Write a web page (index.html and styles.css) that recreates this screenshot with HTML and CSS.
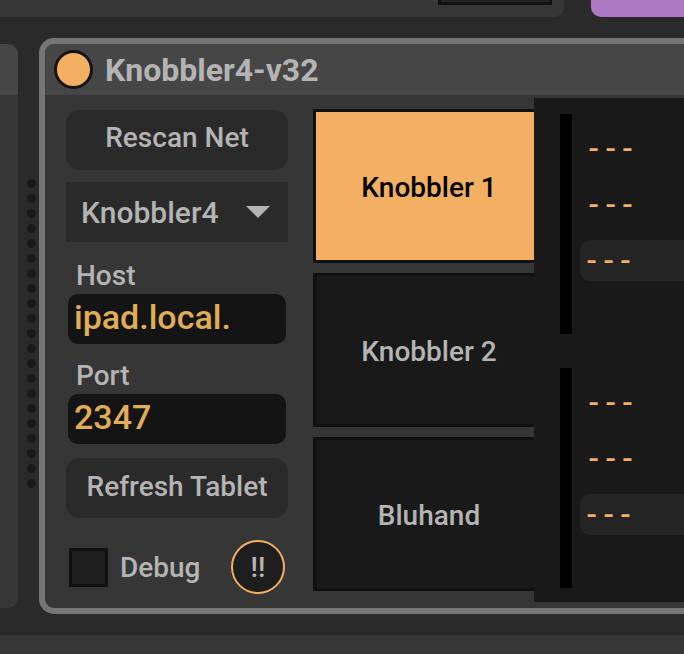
FILE: index.html
```html
<!DOCTYPE html>
<html lang="en">
<head>
<meta charset="utf-8">
<meta name="viewport" content="width=device-width, initial-scale=1">
<title>Knobbler4-v32</title>
<link rel="stylesheet" href="styles.css">
</head>
<body>
<div class="upper">
  <div class="upper-track"><div class="upper-slot"></div></div>
  <div class="upper-clip"></div>
</div>
<main class="rack">
  <div class="neighbor"><div class="neighbor-head"></div></div>
  <div class="meter">
    <svg width="9" height="310" viewBox="0 0 9 310" aria-hidden="true">
      <defs><pattern id="dots" width="9" height="15" patternUnits="userSpaceOnUse"><circle cx="4.5" cy="4.5" r="4.5" fill="#191919"/></pattern></defs>
      <rect width="9" height="310" fill="url(#dots)"/>
    </svg>
  </div>
  <section class="device">
    <header class="device-head">
      <button class="power" type="button" aria-label="Device on"></button>
      <h1 class="title">Knobbler4-v32</h1>
    </header>
    <div class="device-body">
      <form class="settings">
        <button class="pill" type="button">Rescan Net</button>
        <div class="chooser">
          <select class="select" aria-label="Target"><option>Knobbler4</option></select>
          <svg class="caret" width="24" height="12" viewBox="0 0 24 12" aria-hidden="true"><path d="M0 0h24L12 12z" fill="#b4b4b4"/></svg>
        </div>
        <div class="field">
          <label class="label" for="host">Host</label>
          <input class="input" id="host" type="text" value="ipad.local.">
        </div>
        <div class="field">
          <label class="label" for="port">Port</label>
          <input class="input" id="port" type="text" value="2347">
        </div>
        <button class="pill refresh" type="button">Refresh Tablet</button>
        <div class="debug">
          <input class="check" id="debug" type="checkbox">
          <label class="debug-label" for="debug">Debug</label>
          <button class="alert" type="button">!!</button>
        </div>
      </form>
      <nav class="tabs">
        <button class="tab tab-on" type="button">Knobbler 1</button>
        <button class="tab" type="button">Knobbler 2</button>
        <button class="tab" type="button">Bluhand</button>
      </nav>
      <div class="slots">
        <div class="slot">
          <div class="bar"></div>
          <div class="values">
            <div class="value">- - -</div>
            <div class="value">- - -</div>
            <div class="value value-box">- - -</div>
          </div>
        </div>
        <div class="slot">
          <div class="bar"></div>
          <div class="values">
            <div class="value">- - -</div>
            <div class="value">- - -</div>
            <div class="value value-box">- - -</div>
          </div>
        </div>
      </div>
    </div>
  </section>
</main>
<footer class="status"></footer>
</body>
</html>
```
FILE: styles.css
```css
* { box-sizing: border-box; }

body {
  margin: 0;
  min-height: 100vh;
  display: flex;
  flex-direction: column;
  background: #2a2a2a;
  color: #b4b4b4;
  font-family: Roboto, "Liberation Sans", sans-serif;
  font-size: 28px;
  font-weight: 500;
  overflow-x: hidden;
}

button, input, select {
  font: inherit;
  color: inherit;
  margin: 0;
  border: 0;
  padding: 0;
}

.upper { display: flex; gap: 27px; height: 17px; }
.upper-track {
  width: 564px;
  background: #363636;
  border-radius: 0 0 10px 0;
  display: flex;
  justify-content: flex-end;
  padding-right: 12px;
}
.upper-slot {
  width: 114px;
  height: 5px;
  background: #242424;
  border: 3px solid #111;
  border-top: 0;
}
.upper-clip { flex: 1; background: #ac78c0; border-radius: 0 0 0 10px; }

.rack { display: flex; padding: 21px 0; }

.neighbor {
  width: 18px;
  margin: 6px 0;
  background: #363636;
  border-radius: 0 10px 10px 0;
  overflow: hidden;
}
.neighbor-head { height: 51px; background: #464646; }

.meter { width: 21px; padding: 141px 0 0 9px; }
.meter svg { display: block; }

.device {
  flex: 1;
  min-width: 0;
  background: #363636;
  border: 6px solid #757575;
  border-right: 0;
  border-radius: 15px 0 0 15px;
  overflow: hidden;
}
.device-head {
  display: flex;
  align-items: center;
  gap: 12px;
  height: 51px;
  padding-left: 9px;
  background: #464646;
}
.power {
  width: 39px;
  height: 39px;
  border: 3px solid #141414;
  border-radius: 50%;
  background: #f3b063;
}
.title { margin: 0; font-size: 32px; line-height: 40px; font-weight: 700; }

.device-body { display: flex; padding: 3px 0 6px 21px; }

.settings {
  width: 222px;
  margin-right: 25px;
  padding-top: 12px;
  display: flex;
  flex-direction: column;
}
.pill {
  height: 60px;
  padding-bottom: 5px;
  border-radius: 14px;
  background: #2a2a2a;
}
.chooser {
  display: grid;
  align-items: center;
  margin: 12px 0 18px;
  background: #2a2a2a;
}
.select {
  grid-area: 1 / 1;
  appearance: none;
  height: 60px;
  padding-left: 15px;
  background: transparent;
  font-size: 30px;
}
.caret { grid-area: 1 / 1; justify-self: end; margin-right: 18px; pointer-events: none; }

.field { display: flex; flex-direction: column; padding: 0 2px; margin-bottom: 16px; }
.label { padding: 0 0 2px 8px; line-height: 32px; }
.input {
  width: 100%;
  height: 50px;
  padding: 0 6px 4px;
  border-radius: 10px;
  background: #141414;
  color: #e0ad58;
  font-size: 34px;
}
.field + .refresh { margin-top: -2px; padding-bottom: 3px; }

.debug { display: flex; align-items: center; margin: 22px 3px 0; }
.check {
  appearance: none;
  width: 39px;
  height: 39px;
  border: 3px solid #111;
  background: #1e1e1e;
}
.debug-label { flex: 1; padding-left: 12px; }
.alert {
  width: 54px;
  height: 54px;
  border: 2px solid #f3b063;
  border-radius: 50%;
  background: #1e1e1e;
}

.tabs {
  width: 221px;
  padding-top: 11px;
  display: flex;
  flex-direction: column;
  gap: 10px;
  overflow: hidden;
}
.tab {
  width: 232px;
  height: 154px;
  padding-top: 2px;
  border: 3px solid #111;
  background: #191919;
}
.tab-on { background: #f3b063; color: #000; }

.slots {
  flex: 1;
  min-width: 0;
  display: flex;
  flex-direction: column;
  gap: 34px;
  padding: 16px 0 14px 26px;
  background: #191919;
}
.slot { display: flex; gap: 8px; height: 220px; }
.bar { width: 12px; background: #000; }
.values {
  flex: 1;
  display: flex;
  flex-direction: column;
  gap: 15px;
  padding-top: 14px;
  color: #f3b063;
  font-family: Inter, sans-serif;
  font-size: 24px;
  font-weight: 700;
  line-height: 41px;
}
.value { padding-left: 8px; }
.value-box { padding-left: 6px; background: #242424; border-radius: 10px 0 0 10px; }

.status { flex: 1; min-height: 19px; background: #363636; }
```
